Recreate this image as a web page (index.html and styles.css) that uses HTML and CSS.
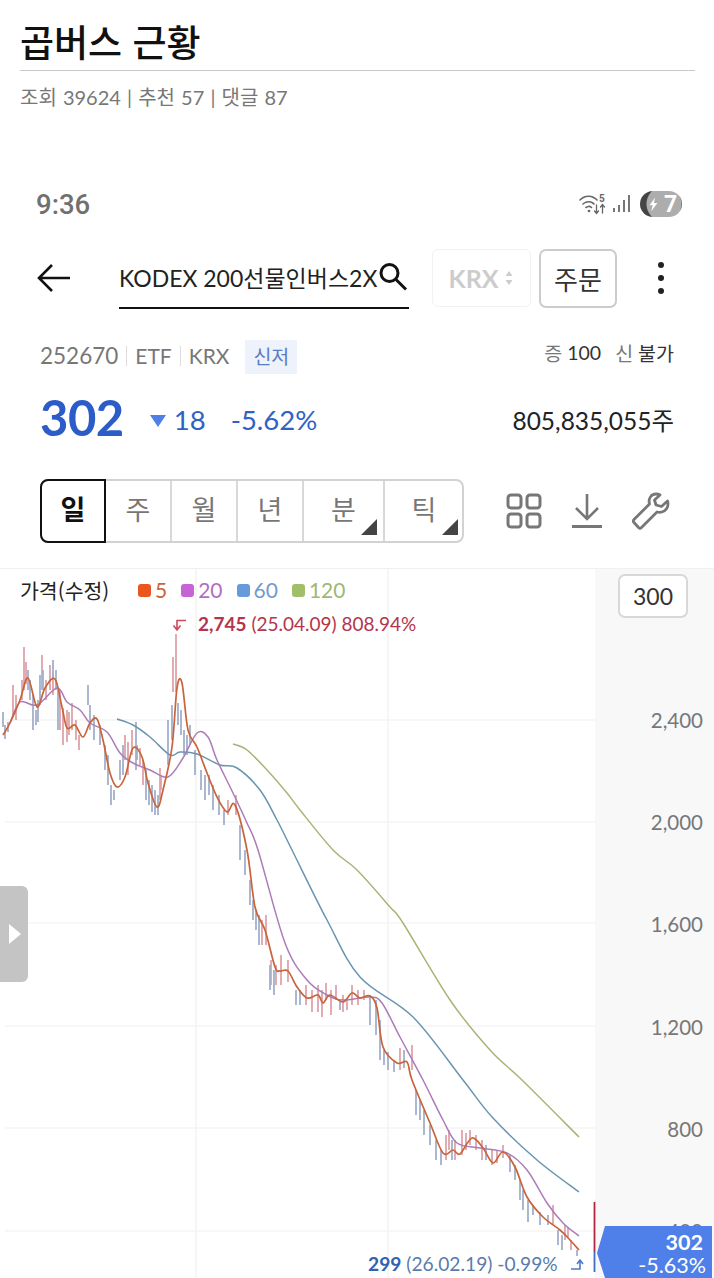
FILE: index.html
```html
<!DOCTYPE html>
<html lang="ko">
<head>
    <meta charset="UTF-8">
    <meta name="viewport" content="width=device-width, initial-scale=1.0">
    <title>곱버스 근황</title>
    <link rel="stylesheet" href="styles.css">
</head>
<body>
    <header class="post-head">
        <h1 class="post-title">곱버스 근황</h1>
        <p class="post-meta">조회 39624 | 추천 57 | 댓글 87</p>
    </header>

    <div class="status-bar">
        <span class="clock">9:36</span>
        <div class="status-icons">
            <svg class="wifi-icon" width="28" height="24" viewBox="0 0 28 24" fill="none" stroke="#666" stroke-width="1.6" stroke-linecap="round">
                <path d="M1 8c5-5 12-5 17 0M4 12c3.500-3 8-3 11 0M7 15.500c2-1.500 4-1.500 5.500 0" stroke-dasharray="2.500 1"/>
                <circle cx="10" cy="19" r="1.300" fill="#666" stroke="none"/>
                <path d="M17.500 13v8M15.500 19l2 2.500 2-2.500M23.500 21v-8M21.500 15l2-2.500 2 2.500" stroke-width="1.300"/>
                <text x="20" y="10" class="wifi-five">5</text>
            </svg>
            <svg width="20" height="20" viewBox="0 0 20 20" fill="#777">
                <rect x="1" y="14" width="2" height="4"/>
                <rect x="6" y="11" width="2" height="7"/>
                <rect x="11" y="6" width="2" height="12"/>
                <rect x="16" y="1" width="2" height="17"/>
            </svg>
            <div class="battery">
                <svg width="11" height="17" viewBox="0 0 14 18" fill="#fff"><path d="M9 0L2 10h4l-2 8 8-11H7.500z"/></svg>
                <span>7</span>
            </div>
        </div>
    </div>

    <div class="toolbar">
        <svg class="back-icon" width="34" height="30" viewBox="0 0 34 30" fill="none" stroke="#111" stroke-width="2.600"><path d="M16 2L3 15l13 13M3 15h31"/></svg>
        <div class="search-box">
            <span class="search-text">KODEX 200선물인버스2X</span>
            <svg class="search-icon" width="32" height="32" viewBox="0 0 32 32" fill="none" stroke="#111" stroke-width="3"><circle cx="12.500" cy="12" r="8.500"/><path d="M19 18.500l10 10"/></svg>
        </div>
        <div class="market-box">
            <span>KRX</span>
            <svg width="10" height="16" viewBox="0 0 10 16" fill="#ccc"><path d="M5 1l3.500 5h-7zM5 15l-3.500-5h7z"/></svg>
        </div>
        <button class="order-btn">주문</button>
        <div class="more-dots"><i></i><i></i><i></i></div>
    </div>

    <div class="info-row">
        <div class="info-left">
            <span>252670</span><span class="sep"></span><span class="info-small">ETF</span><span class="sep"></span><span class="info-small">KRX</span>
            <span class="tag">신저</span>
        </div>
        <div class="info-right">
            <span class="light">증</span><span>100</span><span class="light gap">신</span><span>불가</span>
        </div>
    </div>

    <div class="price-row">
        <span class="price">302</span>
        <span class="down-arrow"></span>
        <span class="change">18</span>
        <span class="change rate">-5.62%</span>
        <span class="volume">805,835,055주</span>
    </div>

    <div class="period-row">
        <div class="tabs">
            <div class="tab active">일</div>
            <div class="tab">주</div>
            <div class="tab">월</div>
            <div class="tab">년</div>
            <div class="tab wide corner">분</div>
            <div class="tab wide corner">틱</div>
        </div>
        <div class="tools">
            <svg width="36" height="36" viewBox="0 0 36 36" fill="none" stroke="#777" stroke-width="3"><rect x="2" y="2" width="13" height="13" rx="3"/><rect x="21" y="2" width="13" height="13" rx="3"/><rect x="2" y="21" width="13" height="13" rx="3"/><rect x="21" y="21" width="13" height="13" rx="3"/></svg>
            <svg width="32" height="36" viewBox="0 0 32 36" fill="none" stroke="#777" stroke-width="2.600"><path d="M16 1v25M5 15l11 11 11-11"/><path d="M1 33.500h30" stroke-width="3"/></svg>
            <svg width="38" height="38" viewBox="0 0 38 38" fill="none" stroke="#777" stroke-width="2.800" stroke-linejoin="round"><path d="M24 2c-5 0-8 5-6.500 10L2 27.500c-1 1-1 2 0 3l4.500 5c1 1 2 1 3 0L25 20c5 1.500 11-2 11-8 0-1 0-2-.5-3l-6 5.500-5.500-1.500-1.500-5L28 3c-1-.7-2.500-1-4-1z"/></svg>
        </div>
    </div>

    <section class="chart">
        <svg class="chart-svg" width="714" height="710" viewBox="0 568 714 710" fill="none">
            <rect x="595" y="568" width="119" height="710" fill="#f8f8f8"/>
            <path d="M0 568.500H714M5 720H595M5 822H595M5 923H595M5 1026H595M5 1128H595M5 1231H595M196 568V1278M388 568V1278" stroke="#f0f0f0" stroke-width="1.200"/>

            <path stroke="#dfa3ab" stroke-width="1.800" d="M13 685V715M16 695V720M22 680V700M24 647V690M26 662V684M42 655V690M46 680V700M50 665V690M53 672V695M60 690V730M63 708V745M67 710V742M69 712V735M72 703V730M76 720V740M79 735V750M125 735V760M128 742V775M132 730V755M140 748V765M143 760V785M160 768V800M176 634V692M173 657V692M161 775V790M228 800V815M236 795V815M262 920V945M266 915V945M271 960V985M276 965V985M281 955V985M288 960V982M306 985V1005M312 990V1012M318 985V1012M322 990V1017M326 983V1000M331 990V1015M336 985V1000M343 995V1012M347 1000V1010M352 985V1005M358 990V1005M364 990V1000M400 1048V1070M412 1045V1070M446 1135V1160M449 1130V1150M455 1140V1160M462 1130V1155M466 1133V1150M470 1130V1145M476 1135V1150M482 1140V1160M492 1150V1165M497 1150V1163M503 1145V1158M553 1205V1225M565 1225V1240M568 1228V1238M571 1240V1250"/>
            <path stroke="#a3b0cc" stroke-width="1.800" d="M3 712V727M5 725V739M8 722V732M28 670V690M30 680V700M33 695V730M36 710V725M38 700V722M40 675V705M43 670V690M53 660V680M56 670V690M58 690V730M88 685V705M90 705V730M94 715V740M100 725V745M105 745V770M108 755V785M111 785V805M114 790V800M120 760V780M123 745V775M136 722V770M137 745V760M146 770V800M149 780V805M152 785V812M155 790V815M158 795V815M168 720V765M172 705V740M178 703V725M181 710V735M184 730V755M187 735V755M190 725V745M195 750V775M201 770V790M205 775V800M209 775V795M213 785V810M219 795V815M224 810V825M240 825V860M245 850V875M250 880V905M253 900V920M256 910V930M259 915V945M270 965V990M274 970V995M296 990V1005M300 990V1005M340 1000V1010M370 995V1025M376 1000V1035M380 1020V1060M384 1050V1065M388 1052V1070M394 1060V1072M404 1050V1068M416 1090V1115M420 1100V1120M424 1110V1135M430 1125V1145M436 1140V1160M441 1150V1165M452 1140V1160M486 1145V1160M510 1155V1172M515 1165V1180M520 1180V1200M523 1190V1210M528 1200V1222M533 1205V1215M540 1212V1225M548 1215V1225M558 1230V1245M562 1235V1250M577 1250V1256"/>

            <path id="ma120" stroke="#aeb178" stroke-width="1.500"/>
            <path id="ma60" stroke="#6a95b0" stroke-width="1.500"/>
            <path id="ma20" stroke="#ac7cb8" stroke-width="1.500"/>
            <path id="ma5" stroke="#c9643a" stroke-width="1.700"/>

            <path stroke="#d0485c" stroke-width="1.600" d="M186 620.500H177V630M173.500 625.500L177 630L180.500 625.500"/>
            <path stroke="#b5253f" stroke-width="1.800" d="M594.500 1202V1252"/>
            <path stroke="#3f6fc0" stroke-width="1.800" d="M594.500 1252V1272"/>
            <path stroke="#4f78c8" stroke-width="1.600" d="M571 1269H580V1261M577 1264L580 1260L583 1264"/>
        </svg>

        <div class="legend">
            <span class="legend-title">가격(수정)</span>
            <span class="ma ma-5"><i></i>5</span>
            <span class="ma ma-20"><i></i>20</span>
            <span class="ma ma-60"><i></i>60</span>
            <span class="ma ma-120"><i></i>120</span>
        </div>
        <div class="axis-box">300</div>
        <div class="axis-label" style="top:140px">2,400</div>
        <div class="axis-label" style="top:242px">2,000</div>
        <div class="axis-label" style="top:344px">1,600</div>
        <div class="axis-label" style="top:447px">1,200</div>
        <div class="axis-label" style="top:549px">800</div>
        <div class="axis-label" style="top:651px">400</div>
        <div class="high-label"><b>2,745</b> (25.04.09) 808.94%</div>
        <div class="low-label"><b>299</b> (26.02.19) -0.99%</div>
        <div class="price-tag"><b>302</b><span>-5.63%</span></div>
        <div class="side-handle"></div>
    </section>

    <script src="chart.js"></script>
</body>
</html>
```

FILE: styles.css
```css
* {
    box-sizing: border-box;
}
html, body {
    height: 1278px;
    overflow: hidden;
}
body {
    margin: 0;
    background-color: #fff;
    color: #222;
    font-family: "Lato", "Noto Sans CJK KR", sans-serif;
}

/* post header */
.post-head {
    padding: 20px 19px 0 20px;
}
.post-title {
    margin: 0;
    height: 51px;
    border-bottom: 1px solid #c9c9c9;
    font-family: "Noto Sans CJK KR", sans-serif;
    font-size: 37px;
    font-weight: 500;
    line-height: 43px;
    color: #111;
}
.post-meta {
    margin: 13px 0 0;
    font-size: 20px;
    line-height: 26px;
    word-spacing: 1px;
    color: #777;
}

/* status bar */
.status-bar {
    display: flex;
    justify-content: space-between;
    align-items: center;
    height: 32px;
    margin-top: 78px;
    padding: 0 32px 0 36px;
}
.clock {
    font-family: "Roboto", sans-serif;
    font-size: 27.500px;
    font-weight: 500;
    color: #707070;
}
.status-icons {
    display: flex;
    align-items: center;
    gap: 5px;
}
.wifi-five {
    font-family: "Roboto", sans-serif;
    font-size: 10px;
    font-weight: 700;
    fill: #666;
    stroke: none;
}
.battery {
    display: flex;
    align-items: center;
    gap: 5px;
    width: 42px;
    height: 26px;
    margin-left: 3px;
    padding-left: 8px;
    border-radius: 13px;
    background: radial-gradient(circle at 24px 13px, #adadad 17px, #444 18px);
    color: #fff;
    font-family: "Roboto", sans-serif;
    font-size: 23px;
    font-weight: 700;
}

/* search row */
.toolbar {
    display: flex;
    align-items: center;
    height: 60px;
    margin-top: 28px;
    padding-left: 36px;
}
.back-icon {
    flex: none;
}
.search-box {
    display: flex;
    align-items: center;
    justify-content: space-between;
    width: 290px;
    height: 62px;
    margin-left: 49px;
    border-bottom: 2px solid #111;
    color: #222;
}
.search-text {
    font-size: 23px;
    white-space: nowrap;
}
.search-icon {
    flex: none;
}
.market-box {
    display: flex;
    align-items: center;
    justify-content: center;
    gap: 6px;
    width: 99px;
    height: 58px;
    margin-left: 23px;
    border: 1px solid #f2f2f2;
    border-radius: 6px;
    color: #ccc;
    font-size: 25px;
    font-weight: 700;
}
.order-btn {
    width: 78px;
    height: 59px;
    margin-left: 8px;
    padding: 0;
    border: 2px solid #ccc;
    border-radius: 7px;
    background-color: #fff;
    color: #333;
    font-family: "Noto Sans CJK KR", sans-serif;
    font-size: 26px;
}
.more-dots {
    display: flex;
    flex-direction: column;
    gap: 7px;
    margin-left: 41px;
}
.more-dots i {
    width: 6px;
    height: 6px;
    border-radius: 50%;
    background-color: #222;
}

/* stock info */
.info-row {
    display: flex;
    justify-content: space-between;
    align-items: center;
    height: 34px;
    margin-top: 32px;
    padding: 0 40px;
    font-size: 22.500px;
    color: #777;
}
.info-left {
    display: flex;
    align-items: center;
    gap: 8px;
    line-height: 30px;
}
.info-left span:not(.tag) {
    margin-bottom: 3px;
}
.info-small {
    font-size: 21px;
}
.sep {
    width: 1px;
    height: 20px;
    background-color: #ddd;
}
.tag {
    margin-left: 8px;
    padding: 0 8px;
    height: 34px;
    line-height: 33px;
    background-color: #edf2fb;
    color: #5a7cc4;
    font-size: 19.500px;
}
.info-right {
    display: flex;
    align-items: center;
    gap: 5px;
    margin-top: -9px;
    color: #333;
    font-size: 19.500px;
}
.light {
    color: #777;
}
.gap {
    margin-left: 9px;
}

.price-row {
    display: flex;
    align-items: center;
    height: 60px;
    margin-top: 14px;
    padding: 0 40px;
}
.price {
    margin-top: -3px;
    color: #2b5cc8;
    font-size: 49px;
    font-weight: 700;
    letter-spacing: -0.5px;
}
.down-arrow {
    width: 0;
    height: 0;
    margin: 6px 8px 0 26px;
    border-left: 8px solid transparent;
    border-right: 8px solid transparent;
    border-top: 12px solid #4f80e6;
}
.change {
    margin-top: 3px;
    color: #2f62c4;
    font-size: 27.500px;
}
.rate {
    margin-left: 25px;
}
.volume {
    margin-top: 3px;
    margin-left: auto;
    color: #222;
    font-size: 24.500px;
}

/* period tabs */
.period-row {
    display: flex;
    align-items: center;
    margin-top: 31px;
    padding-left: 40px;
}
.tabs {
    display: flex;
    width: 424px;
    height: 64px;
    border: 2px solid #d2d2d2;
    border-radius: 8px;
}
.tab {
    position: relative;
    display: flex;
    align-items: center;
    justify-content: center;
    flex: none;
    width: 66px;
    padding-bottom: 6px;
    border-right: 2px solid #d8d8d8;
    color: #777;
    font-family: "Noto Sans CJK KR", sans-serif;
    font-size: 27px;
}
.tab:last-child {
    border-right: none;
}
.tab.active {
    margin: -2px 0 -2px -2px;
    width: 66px;
    border: 2px solid #111;
    border-radius: 8px 0 0 8px;
    color: #111;
    font-weight: 700;
}
.tab.wide {
    width: 81px;
}
.tab.wide:last-child {
    width: 78px;
}
.corner::after {
    content: "";
    position: absolute;
    right: 6px;
    bottom: 6px;
    width: 0;
    height: 0;
    border-left: 16px solid transparent;
    border-bottom: 16px solid #444;
}
.tab.wide:last-child::after {
    right: 5px;
}
.tools {
    display: flex;
    align-items: center;
    gap: 29px;
    margin-left: 42px;
}

/* chart */
.chart {
    position: relative;
    height: 710px;
    margin-top: 25px;
    overflow: hidden;
    font-size: 21px;
}
.chart-svg {
    display: block;
}
.legend {
    position: absolute;
    top: 7px;
    left: 20px;
    display: flex;
    align-items: center;
    font-size: 21px;
    line-height: 30px;
}
.legend-title {
    width: 118px;
    font-family: "Noto Sans CJK KR", sans-serif;
    font-size: 20.500px;
    color: #222;
}
.ma {
    display: flex;
    align-items: center;
    gap: 4px;
    margin-right: 14px;
}
.ma i {
    width: 13px;
    height: 13px;
    border-radius: 3px;
}
.ma-5 { color: #c9643a; }
.ma-5 i { background-color: #ea5520; }
.ma-20 { color: #b26cc6; }
.ma-20 i { background-color: #c664d6; }
.ma-60 { color: #6f9bcf; }
.ma-60 i { background-color: #659bdc; }
.ma-120 { color: #a0b871; }
.ma-120 i { background-color: #a0bf68; }
.axis-box {
    position: absolute;
    top: 6px;
    left: 618px;
    width: 70px;
    height: 44px;
    border: 2px solid #d8d8d8;
    border-radius: 7px;
    background-color: #fff;
    color: #333;
    font-size: 23px;
    line-height: 40px;
    text-align: center;
}
.axis-label {
    position: absolute;
    right: 11px;
    color: #777;
    font-size: 20.500px;
    line-height: 24px;
}
.high-label {
    position: absolute;
    top: 44px;
    left: 198px;
    color: #b5354c;
    font-size: 19px;
    line-height: 24px;
    white-space: nowrap;
}
.low-label {
    position: absolute;
    top: 684px;
    left: 368px;
    color: #5a7cab;
    font-size: 19.200px;
    line-height: 24px;
    white-space: nowrap;
}
.low-label b {
    color: #2f62b0;
}
.price-tag {
    position: absolute;
    top: 658px;
    left: 597px;
    display: flex;
    flex-direction: column;
    align-items: flex-end;
    width: 115px;
    height: 52px;
    padding-right: 9px;
    background-color: #4f7fe8;
    clip-path: polygon(8px 0, 100% 0, 100% 100%, 8px 100%, 0 27px);
    color: #fff;
    font-size: 21.500px;
    line-height: 25px;
}
.price-tag b {
    margin-top: 4px;
}
.price-tag span {
    margin-top: -2px;
    margin-right: -3px;
}
.side-handle {
    position: absolute;
    top: 318px;
    left: 0;
    display: flex;
    align-items: center;
    width: 28px;
    height: 96px;
    border-radius: 0 6px 6px 0;
    background-color: #c4c4c4;
}
.side-handle::after {
    content: "";
    margin-left: 9px;
    border-top: 10px solid transparent;
    border-bottom: 10px solid transparent;
    border-left: 12px solid #fff;
}
```

FILE: chart.js
```js
// moving average lines, in page coordinates
const lines = {
    ma5: [[3,735],[10,723],[20,700],[28,678],[37,707],[45,688],[55,679],[62,707],[67,728],[75,725],[83,737],[90,723],[97,719],[103,740],[110,773],[117,787],[125,777],[133,748],[142,757],[148,783],[157,807],[163,790],[172,747],[177,688],[182,683],[188,730],[197,747],[207,773],[217,797],[227,812],[235,805],[247,850],[255,907],[265,930],[275,967],[280,971],[288,971],[297,987],[307,998],[318,995],[323,1003],[330,995],[343,1002],[352,993],[360,998],[370,996],[377,1008],[383,1047],[397,1063],[407,1062],[412,1080],[430,1123],[443,1153],[453,1150],[460,1154],[472,1138],[483,1148],[493,1163],[503,1152],[515,1167],[527,1197],[543,1217],[560,1230],[570,1240],[579,1250]],
    ma20: [[10,723],[20,702],[37,705],[57,688],[67,702],[80,710],[90,723],[107,732],[120,753],[133,763],[150,770],[168,777],[183,758],[197,733],[208,737],[217,760],[233,793],[247,823],[258,850],[285,943],[307,980],[327,995],[343,1000],[370,997],[382,1003],[400,1037],[423,1080],[443,1120],[457,1143],[480,1148],[507,1153],[527,1170],[547,1203],[563,1223],[579,1236]],
    ma60: [[117,719],[133,725],[150,737],[170,755],[180,752],[197,754],[220,765],[237,768],[260,790],[277,820],[292,850],[327,920],[360,977],[413,1017],[463,1080],[493,1118],[537,1160],[579,1192]],
    ma120: [[233,744],[247,750],[267,770],[287,793],[300,810],[333,850],[357,870],[390,907],[403,923],[450,1000],[490,1050],[522,1080],[579,1137]]
};

// catmull-rom through the points so the lines don't look angular
function smoothPath(pts) {
    let d = 'M' + pts[0][0] + ' ' + pts[0][1];
    for (let i = 0; i < pts.length - 1; i++) {
        const p0 = pts[i - 1] || pts[i];
        const p1 = pts[i];
        const p2 = pts[i + 1];
        const p3 = pts[i + 2] || p2;
        const c1x = p1[0] + (p2[0] - p0[0]) / 6;
        const c1y = p1[1] + (p2[1] - p0[1]) / 6;
        const c2x = p2[0] - (p3[0] - p1[0]) / 6;
        const c2y = p2[1] - (p3[1] - p1[1]) / 6;
        d += 'C' + c1x + ' ' + c1y + ' ' + c2x + ' ' + c2y + ' ' + p2[0] + ' ' + p2[1];
    }
    return d;
}

Object.keys(lines).forEach((id) => {
    document.getElementById(id).setAttribute('d', smoothPath(lines[id]));
});
```
